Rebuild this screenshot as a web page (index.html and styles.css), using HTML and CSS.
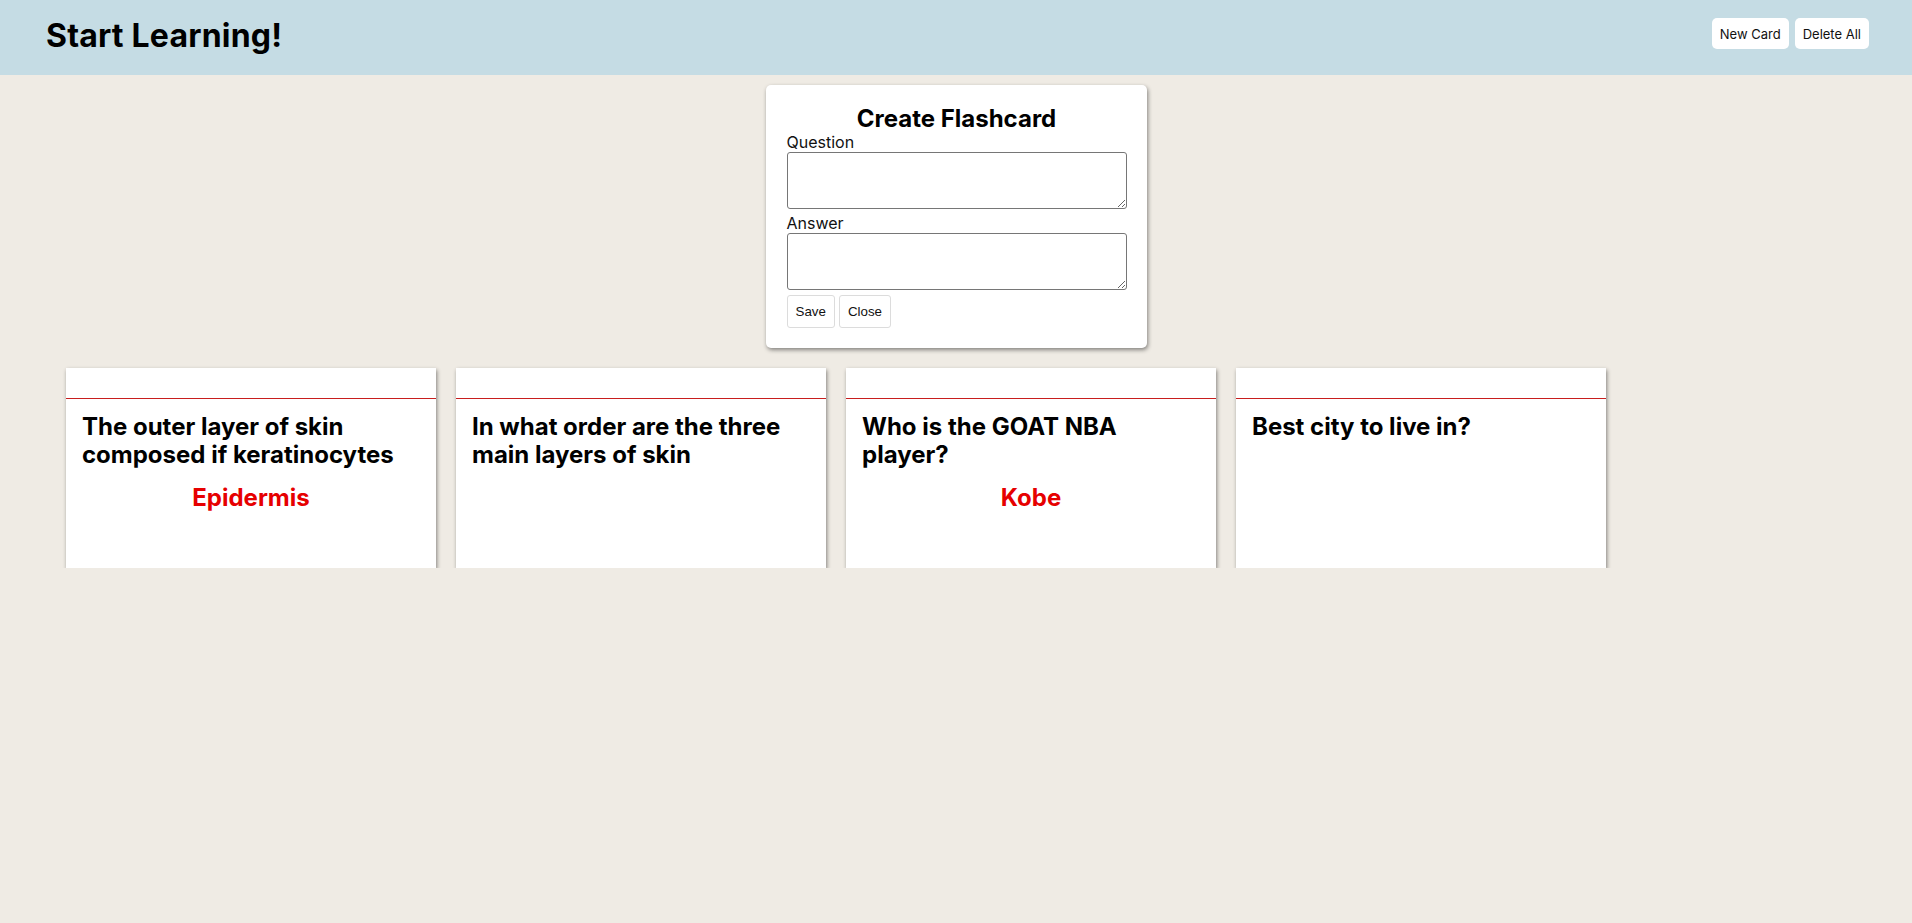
FILE: index.html
```html
<!DOCTYPE html>
<html lang="en">
<head>
<meta charset="utf-8">
<title>Flashcards</title>
<link rel="stylesheet" href="styles.css">
</head>
<body>
<header class="topbar">
  <h1 class="brand">Start Learning!</h1>
  <div class="top-actions">
    <button class="top-btn">New Card</button>
    <button class="top-btn">Delete All</button>
  </div>
</header>
<main class="main">
  <section class="form-card">
    <h2 class="form-title">Create Flashcard</h2>
    <label class="field-label" for="q">Question</label>
    <textarea class="field" id="q"></textarea>
    <label class="field-label field-label-gap" for="a">Answer</label>
    <textarea class="field" id="a"></textarea>
    <div class="form-actions">
      <button class="form-btn">Save</button>
      <button class="form-btn">Close</button>
    </div>
  </section>
  <section class="cards">
    <article class="card">
      <div class="card-head"></div>
      <div class="card-body">
        <h3 class="question">The outer layer of skin composed if keratinocytes</h3>
        <p class="answer">Epidermis</p>
      </div>
    </article>
    <article class="card">
      <div class="card-head"></div>
      <div class="card-body">
        <h3 class="question">In what order are the three main layers of skin</h3>
      </div>
    </article>
    <article class="card">
      <div class="card-head"></div>
      <div class="card-body">
        <h3 class="question">Who is the GOAT NBA player?</h3>
        <p class="answer">Kobe</p>
      </div>
    </article>
    <article class="card">
      <div class="card-head"></div>
      <div class="card-body">
        <h3 class="question">Best city to live in?</h3>
      </div>
    </article>
  </section>
</main>
</body>
</html>
```
FILE: styles.css
```css
* { box-sizing: border-box; }

body {
  margin: 0;
  background: #efebe4;
  font-family: Inter, "Open Sans", sans-serif;
  color: #000;
}

.topbar {
  height: 75px;
  background: #c5dce4;
  display: flex;
  align-items: center;
  justify-content: space-between;
  padding: 0 43px 0 46px;
}

.brand {
  margin: 0;
  font-size: 32px;
  font-weight: 750;
  line-height: 38px;
  margin-top: -3px;
  letter-spacing: 0.2px;
}

.top-actions {
  display: flex;
  gap: 6px;
  margin-bottom: 8px;
}

.top-btn {
  height: 31px;
  padding: 0 8px;
  border: none;
  border-radius: 5px;
  background: #fff;
  font-family: Inter, sans-serif;
  font-size: 13px;
  color: #111;
}

.main {
  display: flex;
  flex-direction: column;
  align-items: center;
  padding-top: 10px;
}

.form-card {
  width: 381px;
  background: #fff;
  border-radius: 5px;
  box-shadow: 1px 2px 4px rgba(0, 0, 0, 0.45);
  padding: 20px 20px 20px 21px;
  display: flex;
  flex-direction: column;
}

.form-title {
  margin: 0;
  text-align: center;
  font-size: 24px;
  line-height: 28px;
  font-weight: 750;
}

.field-label {
  font-size: 16px;
  line-height: 19px;
  color: #111;
}

.field-label-gap { margin-top: 5px; }

.field {
  display: block;
  width: 340px;
  height: 57px;
  border: 1px solid #767676;
  border-radius: 3px;
  margin: 0;
  padding: 2px;
  font: 13px "Liberation Mono", monospace;
}

.form-actions {
  display: flex;
  gap: 4px;
  margin-top: 5px;
}

.form-btn {
  height: 33px;
  padding: 0 8px;
  background: #fff;
  border: 1px solid #dcdcdc;
  border-radius: 3px;
  font-family: "Liberation Sans", Arial, sans-serif;
  font-size: 13.33px;
  color: #111;
}

.cards {
  align-self: stretch;
  display: flex;
  flex-wrap: wrap;
  gap: 20px;
  padding: 20px 66px 0;
}

.card {
  width: 370px;
  height: 200px;
  background: #fff;
  box-shadow: 1px 2px 4px rgba(0, 0, 0, 0.45);
}

.card-head {
  height: 31px;
  border-bottom: 1px solid #c81e1e;
}

.card-body {
  padding: 14px 16px 0;
}

.question {
  margin: 0;
  font-size: 24px;
  line-height: 28px;
  font-weight: 750;
}

.answer {
  margin: 15px 0 0;
  text-align: center;
  color: #e60000;
  font-size: 24px;
  line-height: 28px;
  font-weight: 750;
}
```
